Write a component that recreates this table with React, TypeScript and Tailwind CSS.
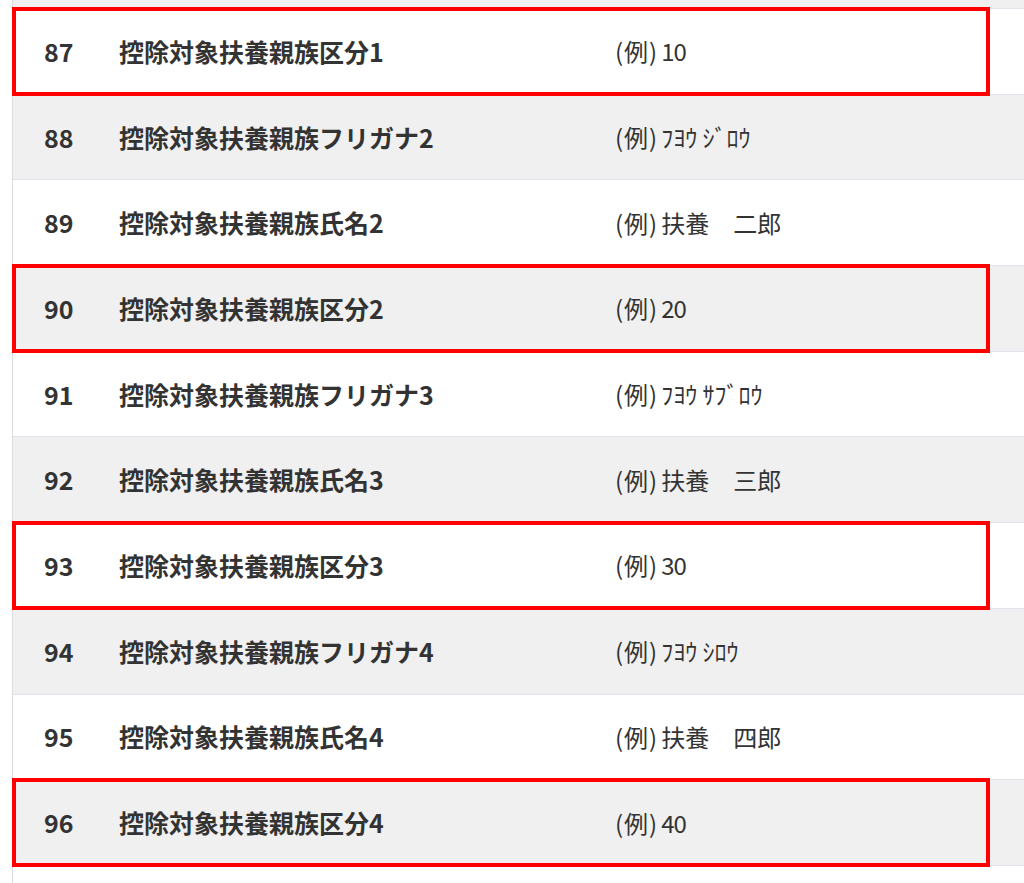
import React from 'react'

type Row = {
  no: number
  label: string
  example: string
  highlight?: boolean
}

const rows: Row[] = [
  { no: 87, label: '控除対象扶養親族区分1', example: '10', highlight: true },
  { no: 88, label: '控除対象扶養親族フリガナ2', example: 'ﾌﾖｳ ｼﾞﾛｳ' },
  { no: 89, label: '控除対象扶養親族氏名2', example: '扶養　二郎' },
  { no: 90, label: '控除対象扶養親族区分2', example: '20', highlight: true },
  { no: 91, label: '控除対象扶養親族フリガナ3', example: 'ﾌﾖｳ ｻﾌﾞﾛｳ' },
  { no: 92, label: '控除対象扶養親族氏名3', example: '扶養　三郎' },
  { no: 93, label: '控除対象扶養親族区分3', example: '30', highlight: true },
  { no: 94, label: '控除対象扶養親族フリガナ4', example: 'ﾌﾖｳ ｼﾛｳ' },
  { no: 95, label: '控除対象扶養親族氏名4', example: '扶養　四郎' },
  { no: 96, label: '控除対象扶養親族区分4', example: '40', highlight: true },
]

export default function App() {
  return (
    <div className="min-h-screen bg-white overflow-hidden font-['Noto_Sans_CJK_JP','Noto_Sans',sans-serif] text-[#333]">
      <div className="ml-[12px] border-l border-[#dcdcdc] flex flex-col">
        {/* tail of row 86 */}
        <div className="h-[9px] bg-[#f0f0f0] border-b border-[#e0e4ea]" />

        {rows.map((row, i) => (
          <div
            key={row.no}
            className={
              'relative flex items-center h-[85.7px] border-b border-[#e0e4ea] ' +
              (i % 2 === 0 ? 'bg-white' : 'bg-[#f0f0f0]')
            }
          >
            <div className="w-[106px] pl-[31px] text-[25px] font-bold leading-none">{row.no}</div>
            <div className="w-[496px] text-[25px] font-bold leading-none">{row.label}</div>
            <div className="flex items-center text-[24px] leading-none">
              <span className="tracking-[1px]">(例)</span>
              <span className={'ml-[3px] ' + (row.highlight ? 'tracking-[-1px]' : '')}>{row.example}</span>
            </div>
            {row.highlight && (
              <div className="absolute left-[-1px] right-[34px] top-[-2px] bottom-[-2px] border-4 border-[#ff0000] z-10 pointer-events-none" />
            )}
          </div>
        ))}

        {/* head of row 97 */}
        <div className="h-[20px] bg-white" />
      </div>
    </div>
  )
}
